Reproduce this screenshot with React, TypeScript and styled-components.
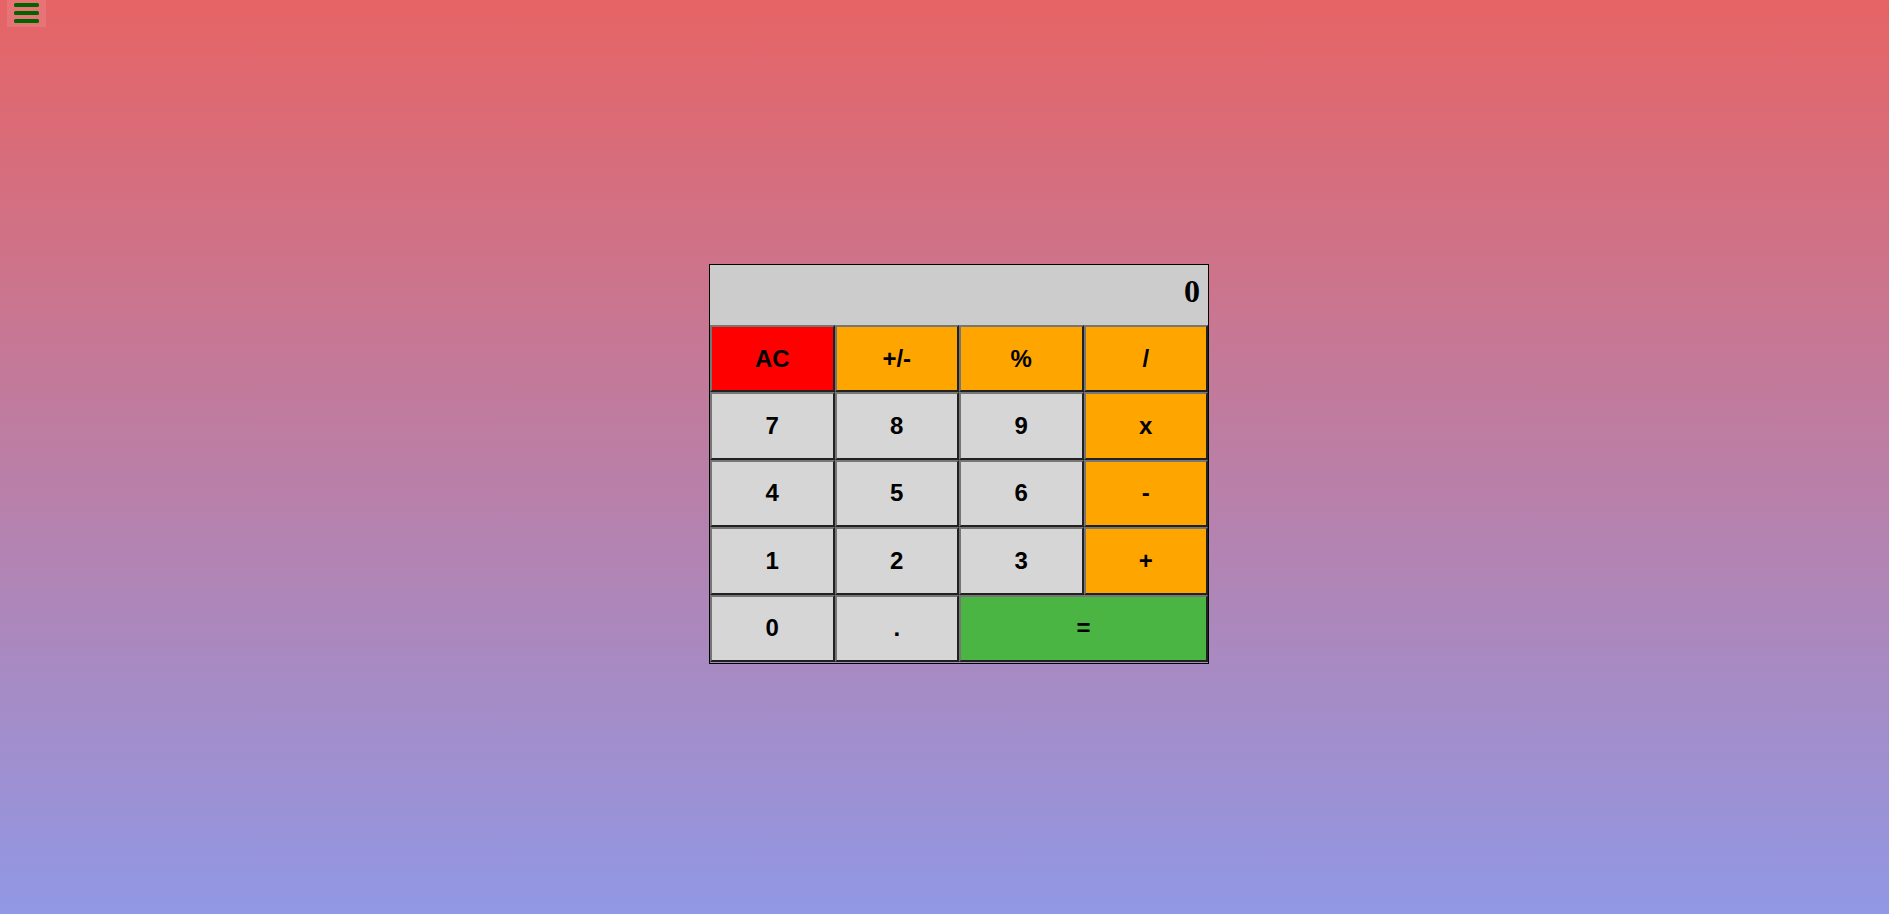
import React, { useState } from "react";
import styled, { createGlobalStyle } from "styled-components";

const GlobalStyle = createGlobalStyle`
  *, *::before, *::after { box-sizing: border-box; }
  body {
    margin: 0;
    min-height: 100vh;
    background: linear-gradient(#e66465, #9198e5) no-repeat;
  }
`;

const Page = styled.div`
  display: flex;
  flex-direction: column;
  min-height: 100vh;
`;

const TopBar = styled.header`
  display: flex;
  padding-left: 7px;
`;

const MenuButton = styled.button`
  display: flex;
  width: 39px;
  height: 27px;
  padding: 3px 7px;
  border: 0;
  background: rgba(255, 255, 255, 0.1);
  color: darkgreen;
  cursor: pointer;
`;

const Main = styled.main`
  flex: 1;
  display: flex;
  justify-content: center;
  align-items: center;
  padding: 0 0 13px 29px;
`;

const CalculatorFrame = styled.section`
  width: 500px;
  max-width: 100%;
  padding-bottom: 1px;
  border: 1px solid black;
`;

const Display = styled.output`
  display: block;
  height: 60px;
  padding: 8px;
  overflow: hidden;
  background: #cccccc;
  font: bold 32px/36px "Liberation Serif", serif;
  text-align: right;
`;

const Keypad = styled.div`
  display: grid;
  grid-template-columns: repeat(4, 1fr);
  grid-template-rows: repeat(5, 1fr);
  height: 337px;
`;

const keyColors = {
  digit: "#d6d6d6",
  operator: "orange",
  clear: "red",
  equals: "#4bb543",
};

type Tone = keyof typeof keyColors;

const Key = styled.button<{ $tone: Tone; $wide?: boolean }>`
  grid-column: span ${({ $wide }) => ($wide ? 2 : 1)};
  padding: 0;
  border: 2px solid;
  border-color: #767676 #212121 #212121 #767676;
  background: ${({ $tone }) => keyColors[$tone]};
  color: black;
  font: bold 24px "Liberation Sans", sans-serif;
  cursor: pointer;
`;

const keys: { label: string; tone: Tone; wide?: boolean }[] = [
  { label: "AC", tone: "clear" },
  { label: "+/-", tone: "operator" },
  { label: "%", tone: "operator" },
  { label: "/", tone: "operator" },
  { label: "7", tone: "digit" },
  { label: "8", tone: "digit" },
  { label: "9", tone: "digit" },
  { label: "x", tone: "operator" },
  { label: "4", tone: "digit" },
  { label: "5", tone: "digit" },
  { label: "6", tone: "digit" },
  { label: "-", tone: "operator" },
  { label: "1", tone: "digit" },
  { label: "2", tone: "digit" },
  { label: "3", tone: "digit" },
  { label: "+", tone: "operator" },
  { label: "0", tone: "digit" },
  { label: ".", tone: "digit" },
  { label: "=", tone: "equals", wide: true },
];

function compute(a: number, b: number, op: string): number {
  if (op === "+") return a + b;
  if (op === "-") return a - b;
  if (op === "x") return a * b;
  return a / b;
}

function MenuIcon() {
  return (
    <svg width="25" height="20" viewBox="0 0 25 20" fill="currentColor" aria-hidden="true">
      <rect y="0" width="25" height="4" rx="1.5" />
      <rect y="8" width="25" height="4" rx="1.5" />
      <rect y="16" width="25" height="4" rx="1.5" />
    </svg>
  );
}

export default function App() {
  const [value, setValue] = useState("0");
  const [stored, setStored] = useState<number | null>(null);
  const [operator, setOperator] = useState("");
  const [fresh, setFresh] = useState(true);

  const press = (label: string) => {
    if (label === "AC") {
      setValue("0");
      setStored(null);
      setOperator("");
      setFresh(true);
    } else if (label === "+/-") {
      setValue(String(-Number(value) || 0));
    } else if (label === "%") {
      setValue(String(Number(value) / 100));
    } else if (/^[0-9.]$/.test(label)) {
      const current = fresh ? "0" : value;
      if (label === "." && current.includes(".")) return;
      setValue(current === "0" && label !== "." ? label : current + label);
      setFresh(false);
    } else {
      const result =
        stored !== null && operator && !fresh
          ? compute(stored, Number(value), operator)
          : Number(value);
      setValue(String(result));
      setStored(label === "=" ? null : result);
      setOperator(label === "=" ? "" : label);
      setFresh(true);
    }
  };

  return (
    <Page>
      <GlobalStyle />
      <TopBar>
        <MenuButton type="button" aria-label="Open menu">
          <MenuIcon />
        </MenuButton>
      </TopBar>
      <Main>
        <CalculatorFrame aria-label="Calculator">
          <Display>{value}</Display>
          <Keypad>
            {keys.map(({ label, tone, wide }) => (
              <Key key={label} type="button" $tone={tone} $wide={wide} onClick={() => press(label)}>
                {label}
              </Key>
            ))}
          </Keypad>
        </CalculatorFrame>
      </Main>
    </Page>
  );
}
